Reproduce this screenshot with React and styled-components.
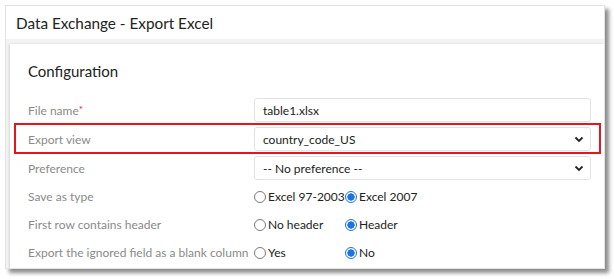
import React from "react"
import styled, { createGlobalStyle } from "styled-components"

const GlobalStyle = createGlobalStyle`
    html, body {
        margin: 0;
        padding: 0;
        background: #ffffff;
    }
    body {
        font-family: Lato, "Noto Sans", sans-serif;
    }
`

const Page = styled.div`
    width: 614px;
    height: 279px;
    padding: 5px 0 0 5px;
    box-sizing: border-box;
`

const Window = styled.div`
    width: 600px;
    height: 264px;
    box-sizing: border-box;
    border: 1px solid #e2e2e2;
    background: #f3f3f3;
    box-shadow: 4px 4px 4px rgba(0, 0, 0, 0.45);
    display: flex;
    flex-direction: column;
    overflow: hidden;
`

const TitleBar = styled.div`
    height: 33px;
    flex: none;
    background: #ffffff;
    display: flex;
    align-items: center;
    padding-left: 10px;
    font-size: 15.3px;
    color: #222222;
`

const Body = styled.div`
    flex: 1;
    padding: 5px 0 0 4px;
    display: flex;
`

const Card = styled.section`
    flex: 1;
    background: #ffffff;
    box-shadow: -1px 0 2px rgba(0, 0, 0, 0.12);
    padding: 17px 13px 0 18px;
`

const Heading = styled.h2`
    margin: 0 0 17px;
    font-size: 15px;
    line-height: 20px;
    font-weight: 400;
    color: #222222;
`

const Form = styled.div`
    display: flex;
    flex-direction: column;
    gap: 5px;
`

const Row = styled.div`
    position: relative;
    display: grid;
    grid-template-columns: 226px 1fr;
    align-items: center;
    height: ${({ $compact }) => ($compact ? "23px" : "24px")};

    ${({ $highlighted }) =>
        $highlighted &&
        `
        &::after {
            content: "";
            position: absolute;
            top: -4px;
            bottom: -3px;
            left: -14px;
            right: -10px;
            border: 2px solid #e8141b;
            pointer-events: none;
        }
    `}
`

const Label = styled.span`
    font-size: 12px;
    color: #8a8a8a;
    white-space: nowrap;
`

const Required = styled.span`
    color: #e8141b;
    font-size: 10px;
    vertical-align: top;
    line-height: 12px;
`

const Field = styled.div`
    height: 24px;
    box-sizing: border-box;
    border: 1px solid #e3e3e3;
    border-radius: 3px;
    background: #ffffff;
    display: flex;
    align-items: center;
    justify-content: space-between;
    padding: 0 6px 0 8px;
    font-size: 12px;
    color: #222222;
`

const RadioGroup = styled.div`
    display: grid;
    grid-template-columns: 91px auto;
    justify-content: start;
`

const Option = styled.label`
    display: flex;
    align-items: center;
    gap: 2px;
    font-size: 12px;
    color: #222222;
    white-space: nowrap;
`

const RadioMark = styled.span`
    width: 12px;
    height: 12px;
    box-sizing: border-box;
    border-radius: 50%;
    border: 1px solid ${({ $checked }) => ($checked ? "#1a73e8" : "#7a7a7a")};
    background: ${({ $checked }) =>
        $checked ? "radial-gradient(circle, #1a73e8 0 3.4px, #ffffff 3.9px)" : "#ffffff"};
    flex: none;
`

const Chevron = () => (
    <svg width="10" height="7" viewBox="0 0 10 7">
        <polyline points="1.5,1.5 5,5 8.5,1.5" fill="none" stroke="#222" strokeWidth="1.8" />
    </svg>
)

const Radios = ({ options, value }) => (
    <RadioGroup>
        {options.map((opt) => (
            <Option key={opt}>
                <RadioMark $checked={opt === value} />
                {opt}
            </Option>
        ))}
    </RadioGroup>
)

export default function App() {
    return (
        <>
            <GlobalStyle />
            <Page>
                <Window>
                    <TitleBar>Data Exchange - Export Excel</TitleBar>
                    <Body>
                        <Card>
                            <Heading>Configuration</Heading>
                            <Form>
                                <Row>
                                    <Label>File name<Required>*</Required></Label>
                                    <Field>table1.xlsx</Field>
                                </Row>
                                <Row $highlighted>
                                    <Label>Export view</Label>
                                    <Field>country_code_US<Chevron /></Field>
                                </Row>
                                <Row>
                                    <Label>Preference</Label>
                                    <Field>-- No preference --<Chevron /></Field>
                                </Row>
                                <Row $compact>
                                    <Label>Save as type</Label>
                                    <Radios options={["Excel 97-2003", "Excel 2007"]} value="Excel 2007" />
                                </Row>
                                <Row $compact>
                                    <Label>First row contains header</Label>
                                    <Radios options={["No header", "Header"]} value="Header" />
                                </Row>
                                <Row $compact>
                                    <Label>Export the ignored field as a blank column</Label>
                                    <Radios options={["Yes", "No"]} value="No" />
                                </Row>
                            </Form>
                        </Card>
                    </Body>
                </Window>
            </Page>
        </>
    )
}
